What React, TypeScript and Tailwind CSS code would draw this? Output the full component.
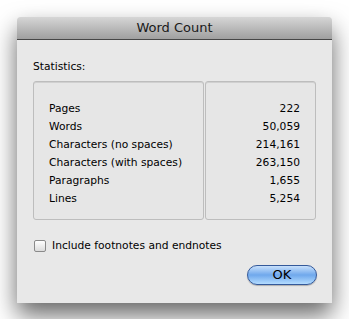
import React from 'react';

const stats: { label: string; value: string }[] = [
  { label: 'Pages', value: '222' },
  { label: 'Words', value: '50,059' },
  { label: 'Characters (no spaces)', value: '214,161' },
  { label: 'Characters (with spaces)', value: '263,150' },
  { label: 'Paragraphs', value: '1,655' },
  { label: 'Lines', value: '5,254' },
];

const App: React.FC = () => {
  return (
    <div className="w-[349px] h-[319px] bg-white pt-[17px] pl-[17px] overflow-hidden font-['DejaVu_Sans',sans-serif] text-[10.7px] text-black">
      <div className="w-[315px] h-[286px] bg-[#e8e8e8] rounded-t-[4px] shadow-[0_12px_24px_rgba(0,0,0,0.6)] flex flex-col">
        <div className="h-[23px] rounded-t-[4px] bg-gradient-to-b from-[#d6d6d6] to-[#a0a0a0] border-b border-[#474747] flex items-center justify-center text-[13px] text-[#1a1a1a]">
          Word Count
        </div>
        <div className="flex flex-col px-[16px]">
          <div className="mt-[20px] h-[14px] leading-[14px]">Statistics:</div>
          <div className="mt-[7px] flex h-[139px]">
            <div className="w-[171px] border border-[#bdbdbd] rounded-[3px] shadow-[inset_0_1px_0_#d0d0d0] bg-[#e6e6e6] pt-[18px] pl-[15px]">
              {stats.map(s => (
                <div key={s.label} className="h-[18px] leading-[18px]">{s.label}</div>
              ))}
            </div>
            <div className="ml-[1px] flex-1 border border-[#bdbdbd] rounded-[3px] shadow-[inset_0_1px_0_#d0d0d0] bg-[#e6e6e6] pt-[18px] pr-[15px] text-right">
              {stats.map(s => (
                <div key={s.label} className="h-[18px] leading-[18px]">{s.value}</div>
              ))}
            </div>
          </div>
          <div className="mt-[20px] flex items-center">
            <div className="ml-[1px] w-[12px] h-[12px] rounded-[2px] border border-[#8a8a8a] bg-gradient-to-b from-[#ffffff] to-[#dcdcdc]" />
            <span className="ml-[6px] leading-[12px]">Include footnotes and endnotes</span>
          </div>
          <div className="mt-[13px] flex justify-end -mr-[1px]">
            <button className="w-[70px] h-[20px] rounded-full border border-[#34599a] bg-gradient-to-b from-[#c8e0fb] via-[#6fa8ec] to-[#b4dcff] text-[13px] leading-[18px] text-black shadow-[0_1px_1px_rgba(0,0,0,0.25)]">
              OK
            </button>
          </div>
        </div>
      </div>
    </div>
  );
};

export default App;
